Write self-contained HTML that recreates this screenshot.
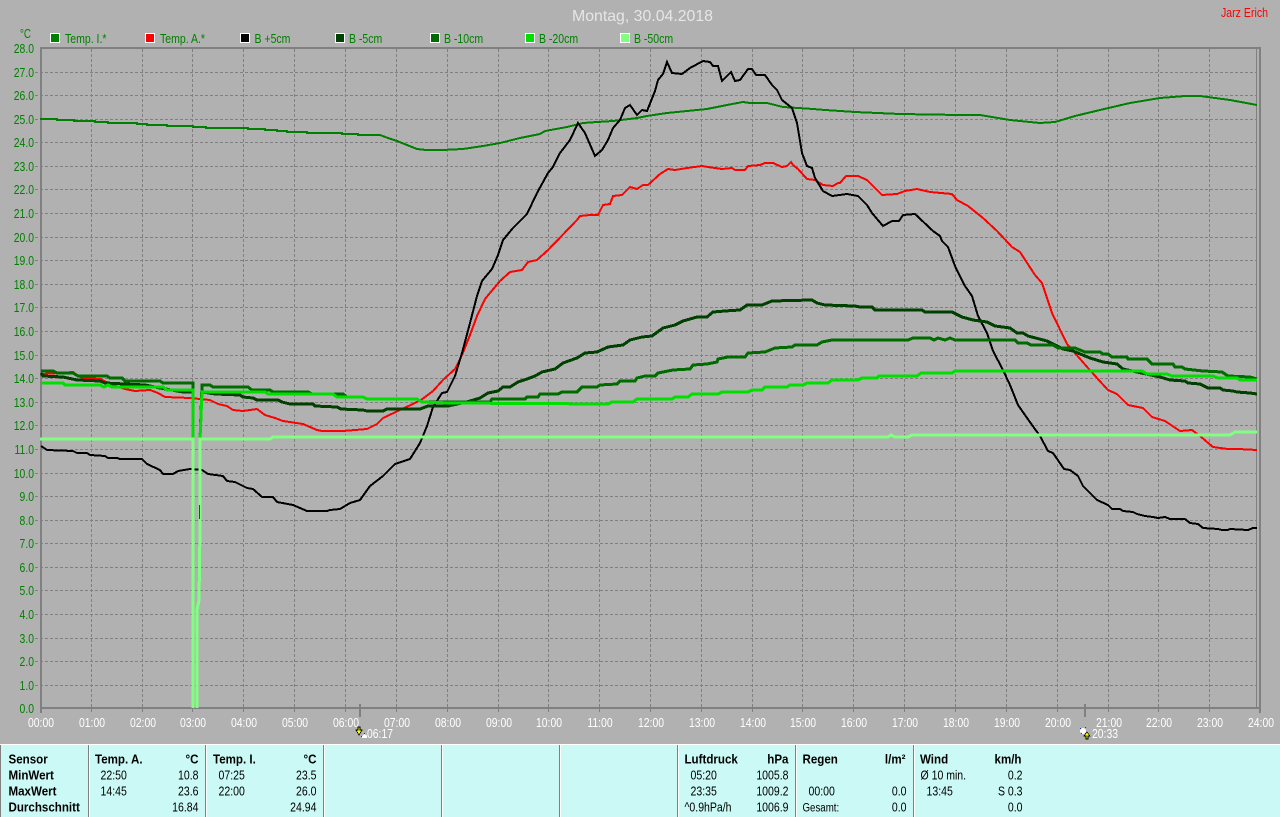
<!DOCTYPE html>
<html><head><meta charset="utf-8"><title>Montag, 30.04.2018</title>
<style>
html,body{margin:0;padding:0;background:#b1b1b1;overflow:hidden}
svg{display:block;position:absolute;left:0;top:0}
text{font-family:"Liberation Sans",Arial,sans-serif}
.c{fill:none;shape-rendering:crispEdges;stroke-linejoin:miter}
.g{stroke:#808080;stroke-width:1;stroke-dasharray:3 2;shape-rendering:crispEdges}
.y text{font-size:13px;fill:#008000;text-anchor:end}
.x text{font-size:13px;fill:#fff;text-anchor:middle}
.l text{font-size:13px;fill:#008000}
.t text{font-size:13px;fill:#000}
.t .b{font-weight:bold}
.t .e{text-anchor:end}
</style></head><body>
<svg width="1280" height="817" viewBox="0 0 1280 817" xmlns="http://www.w3.org/2000/svg">
<rect width="1280" height="817" fill="#b1b1b1"/>
<text x="572" y="21" font-size="16" fill="#e6e6e6" textLength="141" lengthAdjust="spacingAndGlyphs">Montag, 30.04.2018</text>
<text x="1221" y="17" font-size="13" fill="#ff0000" textLength="47" lengthAdjust="spacingAndGlyphs">Jarz Erich</text>
<text x="20" y="38" font-size="13" fill="#008000" textLength="11" lengthAdjust="spacingAndGlyphs">°C</text>

<g class="l">
<rect x="50.5" y="33.5" width="9" height="9" fill="#008000" stroke="#fff"/><text transform="translate(65,43) scale(.81,1)">Temp. I.*</text>
<rect x="145.5" y="33.5" width="9" height="9" fill="#ff0000" stroke="#fff"/><text transform="translate(160,43) scale(.81,1)">Temp. A.*</text>
<rect x="240.5" y="33.5" width="9" height="9" fill="#000" stroke="#fff"/><text transform="translate(254.5,43) scale(.81,1)">B +5cm</text>
<rect x="335.5" y="33.5" width="9" height="9" fill="#004000" stroke="#fff"/><text transform="translate(349,43) scale(.81,1)">B -5cm</text>
<rect x="430.5" y="33.5" width="9" height="9" fill="#006800" stroke="#fff"/><text transform="translate(444,43) scale(.81,1)">B -10cm</text>
<rect x="525.5" y="33.5" width="9" height="9" fill="#00e000" stroke="#fff"/><text transform="translate(539,43) scale(.81,1)">B -20cm</text>
<rect x="620.5" y="33.5" width="9" height="9" fill="#80ff80" stroke="#fff"/><text transform="translate(634,43) scale(.81,1)">B -50cm</text>
</g>

<g class="g">
<path d="M35 72.5H1257M35 95.5H1257M35 119.5H1257M35 142.5H1257M35 166.5H1257M35 189.5H1257M35 213.5H1257M35 237.5H1257M35 260.5H1257M35 284.5H1257M35 307.5H1257M35 331.5H1257M35 355.5H1257M35 378.5H1257M35 402.5H1257M35 425.5H1257M35 449.5H1257M35 473.5H1257M35 496.5H1257M35 520.5H1257M35 543.5H1257M35 567.5H1257M35 590.5H1257M35 614.5H1257M35 638.5H1257M35 661.5H1257M35 685.5H1257"/>
<path d="M91.5 49V713M142.5 49V713M192.5 49V713M243.5 49V713M294.5 49V713M345.5 49V713M396.5 49V713M447.5 49V713M498.5 49V713M548.5 49V713M599.5 49V713M650.5 49V713M701.5 49V713M752.5 49V713M802.5 49V713M853.5 49V713M904.5 49V713M955.5 49V713M1006.5 49V713M1057.5 49V713M1108.5 49V713M1158.5 49V713M1209.5 49V713"/>
</g>
<g fill="#808080" shape-rendering="crispEdges">
<rect x="40" y="47" width="1221" height="2"/>
<rect x="40" y="47" width="2" height="666"/>
<rect x="40" y="707" width="1221" height="2"/>
<rect x="1259" y="47" width="2" height="666"/>
<rect x="1256" y="49" width="1" height="658"/>
<rect x="359" y="704" width="2" height="13"/>
<rect x="1084" y="704" width="2" height="13"/>
</g>

<polyline class="c" stroke="#008000" stroke-width="2" points="40,119 57,119 57,120 74,120 74,121 95,121 95,122 108,122 108,123 137,123 137,124 147,124 147,125 167,125 167,126 193,126 193,127 206,127 206,128 248,128 248,129 265,129 265,130 277,130 277,131 287,131 287,132 307,132 307,133 342,133 342,134 358,134 358,135 380,135 388,138 397,141 407,145 417,149 426,150 442,150 463,149 483,146 500,143 520,138 540,134 545,131 567,127 583,123 597,122 613,121 637,118 647,116 667,113 687,111 707,109 727,105 743,102 750,103 767,103 783,107 813,109 825,110 855,112 900,114 960,115 980,115 1010,120 1040,123 1055,122 1075,116 1100,110 1130,103 1160,98 1185,96 1200,96 1230,100 1257,105"/>

<polyline class="c" stroke="#ff0000" stroke-width="2" points="41,374 60,373 73,372 78,376 83,378 100,379 113,385 125,389 135,391 150,390 158,393 165,397 190,398 210,400 218,404 227,406 233,410 243,411 257,409 265,415 275,418 283,421 303,424 317,430 322,431 343,431 367,429 377,424 383,418 400,410 417,402 421,400 433,391 443,380 455,369 462,355 470,335 477,316 485,299 500,281 510,272 522,270 528,262 537,260 548,250 577,220 580,216 590,215 598,215 603,205 610,204 613,196 622,195 630,187 637,189 643,185 648,185 660,174 668,169 675,170 687,168 702,166 708,167 722,169 732,168 735,170 745,170 748,166 760,165 765,163 773,163 782,167 787,166 791,162 793,165 798,169 807,179 815,180 823,185 833,186 838,183 840,183 846,176 858,176 867,180 882,195 897,194 905,191 917,189 930,192 952,194 957,200 968,206 983,218 997,231 1012,247 1020,252 1035,275 1042,283 1052,313 1067,344 1088,368 1097,378 1108,390 1117,394 1128,405 1143,408 1152,417 1165,421 1180,431 1192,430 1200,436 1213,447 1228,449 1238,449 1257,450"/>

<polyline class="c" stroke="#000" stroke-width="2" points="41,446 47,450 73,451 77,453 87,453 90,455 105,456 108,458 117,458 120,459 142,459 147,464 160,470 163,474 173,474 178,471 190,469 202,470 208,474 223,476 227,481 235,482 247,488 253,489 262,497 273,497 277,502 293,505 307,511 327,511 330,510 340,509 350,503 360,500 370,486 383,476 395,464 410,459 420,443 427,426 433,407 442,393 447,392 455,376 462,353 470,323 477,296 482,281 492,269 498,255 503,240 513,228 527,214 537,193 548,173 553,167 560,153 570,140 578,123 585,133 595,156 602,150 608,140 613,128 620,120 625,108 630,105 637,115 642,110 647,111 655,91 658,80 663,74 667,62 672,73 682,74 690,68 703,61 710,62 713,66 718,66 722,81 731,72 735,81 740,80 748,69 752,69 756,75 765,75 772,85 777,90 782,100 792,108 797,123 802,153 807,166 812,168 815,178 823,191 832,196 847,194 858,196 867,205 872,213 883,226 892,221 899,221 903,215 915,214 933,231 940,236 942,241 948,247 955,266 965,286 972,296 978,316 987,333 993,351 1003,370 1010,385 1018,405 1032,425 1040,436 1048,451 1053,453 1064,469 1070,470 1078,476 1083,486 1097,500 1108,505 1112,509 1120,509 1123,511 1133,512 1137,514 1145,516 1153,517 1158,518 1165,517 1170,519 1185,519 1190,523 1198,524 1203,528 1218,529 1222,530 1228,530 1230,529 1248,530 1253,528 1257,528"/>

<polyline class="c" stroke="#004000" stroke-width="3" points="41,373 43,376 63,377 77,380 100,381 105,383 145,385 160,388 183,392 193,392"/>
<polyline class="c" stroke="#004000" stroke-width="3" points="202,392 215,394 240,395 243,397 253,398 257,400 278,400 282,402 290,404 313,404 315,406 337,407 341,409 363,410 367,411 383,411 387,409 420,409 428,406 448,406 462,403 470,401 480,398 488,393 498,391 503,387 510,387 518,382 527,379 535,376 542,372 555,369 563,363 577,358 585,353 597,352 608,347 623,345 630,340 642,337 652,336 663,328 675,325 683,321 697,317 707,317 713,312 725,311 740,310 747,305 762,305 772,301 812,300 817,303 825,305 855,306 860,307 872,307 875,310 922,310 925,312 952,312 962,317 973,320 987,322 995,326 1010,328 1017,333 1023,333 1028,336 1047,341 1063,349 1073,351 1090,358 1103,362 1117,364 1123,369 1160,377 1170,380 1185,381 1188,383 1200,384 1208,388 1220,388 1223,390 1233,391 1237,392 1250,393 1257,394"/>

<polyline class="c" stroke="#006c00" stroke-width="3" points="41,371 53,371 57,373 73,373 78,376 107,376 110,378 122,378 125,381 160,381 163,383 193,383 193,440"/>
<polyline class="c" stroke="#006c00" stroke-width="3" points="200,440 202,385 210,385 213,387 248,387 252,390 270,390 273,392 308,392 312,394 343,394 347,397 363,397 367,399 417,399 422,402 490,402 492,399 525,399 527,397 538,397 540,394 558,394 562,392 577,392 582,387 597,387 600,385 617,384 620,381 635,381 637,378 645,376 655,376 658,373 673,370 690,369 693,365 707,364 717,362 718,359 728,357 745,357 748,353 765,352 775,348 792,347 795,345 817,345 822,342 832,340 908,340 913,338 930,338 934,340 938,338 945,340 950,338 955,340 1015,340 1018,343 1027,343 1031,345 1053,345 1058,348 1075,348 1080,350 1085,352 1100,352 1103,354 1108,354 1112,357 1127,357 1128,359 1147,359 1152,364 1173,364 1175,367 1182,367 1185,369 1203,371 1222,372 1228,376 1250,377 1257,379"/>

<polyline class="c" stroke="#00e000" stroke-width="3" points="41,383 63,383 65,385 100,385 104,387 108,385 112,387 163,387 167,390 193,390 193,440"/>
<polyline class="c" stroke="#00e000" stroke-width="3" points="200,440 202,392 265,392 268,394 333,394 337,397 363,397 367,399 417,399 422,402 450,403 608,404 612,402 633,402 637,399 672,399 675,397 688,397 692,394 718,394 722,392 748,392 752,390 762,390 765,387 787,387 790,385 803,385 807,383 828,383 832,380 858,380 862,378 877,378 879,376 917,376 921,373 952,373 955,371 1142,371 1147,374 1167,374 1172,376 1213,376 1218,378 1237,378 1240,380 1257,380"/>

<polyline class="c" stroke="#80ff80" stroke-width="3" points="40,439 193,439 193,708"/>
<polyline class="c" stroke="#80ff80" stroke-width="3" points="197,708 197,610 199,600 200,530 200,439 270,439 273,437 888,437 891,435 895,437 908,437 912,435 1230,435 1235,432 1257,432"/>
<rect x="199" y="505" width="1" height="14" fill="#006c00"/>

<g class="y" transform="translate(34,0) scale(.8,1)">
<text y="53">28.0</text><text y="77">27.0</text><text y="100">26.0</text><text y="124">25.0</text><text y="147">24.0</text><text y="171">23.0</text><text y="194">22.0</text><text y="218">21.0</text><text y="242">20.0</text><text y="265">19.0</text><text y="289">18.0</text><text y="312">17.0</text><text y="336">16.0</text><text y="360">15.0</text><text y="383">14.0</text><text y="407">13.0</text><text y="430">12.0</text><text y="454">11.0</text><text y="478">10.0</text><text y="501">9.0</text><text y="525">8.0</text><text y="548">7.0</text><text y="572">6.0</text><text y="595">5.0</text><text y="619">4.0</text><text y="643">3.0</text><text y="666">2.0</text><text y="690">1.0</text><text y="713">0.0</text>
</g>

<g class="x">
<text transform="translate(41,727) scale(.8,1)">00:00</text>
<text transform="translate(92,727) scale(.8,1)">01:00</text>
<text transform="translate(143,727) scale(.8,1)">02:00</text>
<text transform="translate(193,727) scale(.8,1)">03:00</text>
<text transform="translate(244,727) scale(.8,1)">04:00</text>
<text transform="translate(295,727) scale(.8,1)">05:00</text>
<text transform="translate(346,727) scale(.8,1)">06:00</text>
<text transform="translate(397,727) scale(.8,1)">07:00</text>
<text transform="translate(448,727) scale(.8,1)">08:00</text>
<text transform="translate(499,727) scale(.8,1)">09:00</text>
<text transform="translate(549,727) scale(.8,1)">10:00</text>
<text transform="translate(600,727) scale(.8,1)">11:00</text>
<text transform="translate(651,727) scale(.8,1)">12:00</text>
<text transform="translate(702,727) scale(.8,1)">13:00</text>
<text transform="translate(753,727) scale(.8,1)">14:00</text>
<text transform="translate(803,727) scale(.8,1)">15:00</text>
<text transform="translate(854,727) scale(.8,1)">16:00</text>
<text transform="translate(905,727) scale(.8,1)">17:00</text>
<text transform="translate(956,727) scale(.8,1)">18:00</text>
<text transform="translate(1007,727) scale(.8,1)">19:00</text>
<text transform="translate(1058,727) scale(.8,1)">20:00</text>
<text transform="translate(1109,727) scale(.8,1)">21:00</text>
<text transform="translate(1159,727) scale(.8,1)">22:00</text>
<text transform="translate(1210,727) scale(.8,1)">23:00</text>
<text transform="translate(1261,727) scale(.8,1)">24:00</text>
<text transform="translate(380,738) scale(.8,1)">06:17</text>
<text transform="translate(1105,738) scale(.8,1)">20:33</text>
</g>

<!-- sunrise icon -->
<g shape-rendering="crispEdges">
<path d="M358 727h2v3h2l-3 5-3-5h2z" fill="#ffff00" stroke="#000" stroke-width=".7"/>
<path d="M362 738v-2l2-2 2 1 1 1v2z" fill="#fff"/>
<path d="M361 736h1v1h-1zM364 733h1v1h-1z" fill="#2030a0"/>
<!-- sunset icon -->
<circle cx="1083" cy="731" r="3" fill="#fff"/>
<path d="M1080 728h1v1h-1zM1085 727h1v1h-1zM1081 733h1v1h-1z" fill="#2030a0"/>
<path d="M1087 732l3 4h-2v3h-2v-3h-2z" fill="#ffff00" stroke="#000" stroke-width=".7"/>
</g>

<rect x="0" y="744" width="1280" height="1" fill="#fff"/>
<rect x="1" y="745" width="1279" height="72" fill="#cbfaf6"/>
<rect x="0" y="745" width="1" height="72" fill="#808080"/>
<g shape-rendering="crispEdges">
<rect x="88" y="745" width="1" height="72" fill="#808080"/><rect x="89" y="745" width="1" height="72" fill="#fff"/>
<rect x="205" y="745" width="1" height="72" fill="#808080"/><rect x="206" y="745" width="1" height="72" fill="#fff"/>
<rect x="323" y="745" width="1" height="72" fill="#808080"/><rect x="324" y="745" width="1" height="72" fill="#fff"/>
<rect x="441" y="745" width="1" height="72" fill="#808080"/><rect x="442" y="745" width="1" height="72" fill="#fff"/>
<rect x="559" y="745" width="1" height="72" fill="#808080"/><rect x="560" y="745" width="1" height="72" fill="#fff"/>
<rect x="677" y="745" width="1" height="72" fill="#808080"/><rect x="678" y="745" width="1" height="72" fill="#fff"/>
<rect x="795" y="745" width="1" height="72" fill="#808080"/><rect x="796" y="745" width="1" height="72" fill="#fff"/>
<rect x="913" y="745" width="1" height="72" fill="#808080"/><rect x="914" y="745" width="1" height="72" fill="#fff"/>
</g>

<g class="t">
<text class="b" transform="translate(8.5,763.5) scale(.89,1)">Sensor</text>
<text class="b" transform="translate(8.5,779.5) scale(.89,1)">MinWert</text>
<text class="b" transform="translate(8.5,795.5) scale(.89,1)">MaxWert</text>
<text class="b" transform="translate(8.5,811.5) scale(.89,1)">Durchschnitt</text>

<text class="b" transform="translate(95,763.5) scale(.89,1)">Temp. A.</text>
<text class="b e" transform="translate(198.5,763.5) scale(.89,1)">°C</text>
<text transform="translate(100.5,779.5) scale(.81,1)">22:50</text>
<text transform="translate(100.5,795.5) scale(.81,1)">14:45</text>
<text class="e" transform="translate(198.5,779.5) scale(.81,1)">10.8</text>
<text class="e" transform="translate(198.5,795.5) scale(.81,1)">23.6</text>
<text class="e" transform="translate(198.5,811.5) scale(.81,1)">16.84</text>

<text class="b" transform="translate(213,763.5) scale(.89,1)">Temp. I.</text>
<text class="b e" transform="translate(316.5,763.5) scale(.89,1)">°C</text>
<text transform="translate(218.5,779.5) scale(.81,1)">07:25</text>
<text transform="translate(218.5,795.5) scale(.81,1)">22:00</text>
<text class="e" transform="translate(316.5,779.5) scale(.81,1)">23.5</text>
<text class="e" transform="translate(316.5,795.5) scale(.81,1)">26.0</text>
<text class="e" transform="translate(316.5,811.5) scale(.81,1)">24.94</text>

<text class="b" transform="translate(684.5,763.5) scale(.89,1)">Luftdruck</text>
<text class="b e" transform="translate(788.5,763.5) scale(.89,1)">hPa</text>
<text transform="translate(690.5,779.5) scale(.81,1)">05:20</text>
<text transform="translate(690.5,795.5) scale(.81,1)">23:35</text>
<text transform="translate(684.5,811.5) scale(.81,1)">^0.9hPa/h</text>
<text class="e" transform="translate(788.5,779.5) scale(.81,1)">1005.8</text>
<text class="e" transform="translate(788.5,795.5) scale(.81,1)">1009.2</text>
<text class="e" transform="translate(788.5,811.5) scale(.81,1)">1006.9</text>

<text class="b" transform="translate(802.5,763.5) scale(.89,1)">Regen</text>
<text class="b e" transform="translate(905.5,763.5) scale(.89,1)">l/m²</text>
<text transform="translate(808.5,795.5) scale(.81,1)">00:00</text>
<text transform="translate(802.5,811.5) scale(.81,1)" style="font-size:12px">Gesamt:</text>
<text class="e" transform="translate(906.5,795.5) scale(.81,1)">0.0</text>
<text class="e" transform="translate(906.5,811.5) scale(.81,1)">0.0</text>

<text class="b" transform="translate(920,763.5) scale(.89,1)">Wind</text>
<text class="b e" transform="translate(1021.5,763.5) scale(.89,1)">km/h</text>
<text transform="translate(920.5,779.5) scale(.81,1)">Ø 10 min.</text>
<text transform="translate(926.5,795.5) scale(.81,1)">13:45</text>
<text class="e" transform="translate(1022.5,779.5) scale(.81,1)">0.2</text>
<text class="e" transform="translate(1022.5,795.5) scale(.81,1)">S 0.3</text>
<text class="e" transform="translate(1022.5,811.5) scale(.81,1)">0.0</text>
</g>
</svg>
</body></html>
